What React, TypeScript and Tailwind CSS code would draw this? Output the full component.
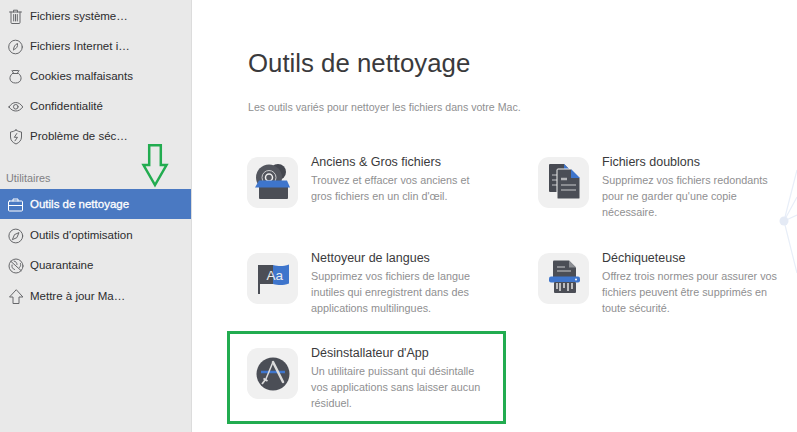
import React from "react";

const font = { fontFamily: '"Liberation Sans", Arial, sans-serif' };

const S = { fill: "none", stroke: "#66676a", strokeWidth: 1, strokeLinecap: "round" as const, strokeLinejoin: "round" as const };

function Ico({ children, color }: { children: React.ReactNode; color?: string }) {
  return (
    <svg width="18" height="18" viewBox="0 0 18 18" className="shrink-0" {...S} stroke={color ?? S.stroke}>
      {children}
    </svg>
  );
}

const Trash = () => (
  <Ico>
    <path d="M2.500 4h12M6.500 4V2.200h4V4M4 4v10.500a1 1 0 0 0 1 1h7a1 1 0 0 0 1-1V4M6.700 6.500v6.500M8.500 6.500v6.500M10.300 6.500v6.500" />
  </Ico>
);
const Leaf = () => (
  <Ico>
    <circle cx="8.500" cy="9" r="6.800" />
    <path d="M6.500 12c0-3 1.500-5.500 4-6.500.4 2.800-.8 5.200-3 5.800" />
  </Ico>
);
const Bug = () => (
  <Ico>
    <path d="M5 2.500l1.500 2.500M12 2.500L10.500 5M6 2.500h5" />
    <path d="M5.500 5.500h6c2 1.500 2.800 3.500 2.500 5.500-.4 2.600-2.600 4-5.500 4S3.400 13.600 3 11c-.3-2 .5-4 2.500-5.500z" />
  </Ico>
);
const Eye = () => (
  <Ico>
    <path d="M2 9c2-3 4.200-4.500 6.800-4.500S13.800 6 15.800 9c-2 2.700-4.400 4-7 4s-4.800-1.300-6.800-4z" />
    <circle cx="8.800" cy="8.800" r="2.300" />
  </Ico>
);
const Shield = () => (
  <Ico>
    <path d="M9 2c1.800 1.200 3.600 1.800 5.500 2v5c0 3.300-2.200 5.600-5.500 7-3.300-1.400-5.500-3.700-5.500-7V4C5.400 3.800 7.200 3.200 9 2z" />
    <path d="M9.800 5.500L7.300 9.300h3.200L8 12.800" />
  </Ico>
);
const Case = () => (
  <Ico color="#ffffff">
    <rect x="1.500" y="5" width="14" height="10" rx="1" />
    <path d="M6 5V3h5v2M1.500 9.500h14" />
  </Ico>
);
const Compass = () => (
  <Ico>
    <circle cx="8.800" cy="9" r="6.900" />
    <path d="M5.500 12.300l2-4.700 4.500-2-2 4.700z" />
  </Ico>
);
const Quarantine = () => (
  <Ico>
    <circle cx="9" cy="9" r="7" />
    <path d="M3.800 4.300l10.400 9.400M7 4c2 .5 3 1.800 3 3.500M5 8c-.5 2 .5 4 2.500 4.500M13.500 6.500c.5 1.500 0 3-1 4" />
  </Ico>
);
const Up = () => (
  <Ico>
    <path d="M9 2L2.500 9H6v6.500h6V9h3.500z" />
  </Ico>
);

function NavRow({ icon, label, active }: { icon: React.ReactNode; label: string; active?: boolean }) {
  return (
    <div
      className={`flex h-[30px] items-center gap-[5px] pl-[7px] text-[11.500px] ${
        active ? "bg-[#4a79c2] pt-[2px] text-white [-webkit-text-stroke:0.3px_white]" : "text-[#2c2c2e]"
      }`}
    >
      {icon}
      <span>{label}</span>
    </div>
  );
}

function Card({ icon, title, lines, w }: { icon: React.ReactNode; title: string; lines: string[]; w: string }) {
  return (
    <div className={`flex gap-[13px] ${w}`}>
      <div className="pt-[3px]">
        <div className="flex h-[51px] w-[51px] shrink-0 items-center justify-center rounded-[11px] bg-[#f0f0f0]">
          {icon}
        </div>
      </div>
      <div>
        <div className="text-[12.500px] leading-[16px] text-[#3a3a3c]">{title}</div>
        <div className="mt-[2px] text-[10.800px] leading-[16px] text-[#8f8f91]">
          {lines.map((l) => (
            <div key={l} className="whitespace-nowrap">{l}</div>
          ))}
        </div>
      </div>
    </div>
  );
}

const BoxIcon = () => (
  <svg width="38" height="38" viewBox="0 0 38 38">
    <circle cx="24" cy="8" r="8" fill="#44474f" />
    <circle cx="15" cy="13.500" r="13" fill="#53565e" />
    <circle cx="15" cy="13.500" r="7" fill="none" stroke="#c9cacc" strokeWidth="1" />
    <circle cx="15" cy="13.500" r="3.500" fill="none" stroke="#eeeeee" strokeWidth="1.500" />
    <rect x="5" y="22" width="29" height="13" rx="1" fill="#4b4e56" />
    <path d="M5 16.500h28l3 7H1z" fill="#3e75cc" />
  </svg>
);
const DocsIcon = () => (
  <svg width="38" height="38" viewBox="0 0 38 38">
    <path d="M4 1a1 1 0 0 1 1-1h14l7 7v21H5a1 1 0 0 1-1-1z" fill="#474a52" />
    <path d="M19 0l7 7h-7z" fill="#3e75cc" />
    <path d="M7 11h5M7 16h5M7 21h5" stroke="#9a9ca1" strokeWidth="1.500" />
    <path d="M12 6a1 1 0 0 1 1-1h13l9 9v20a1 1 0 0 1-1 1H13a1 1 0 0 1-1-1z" fill="#4b4e56" stroke="#f0f0f0" strokeWidth="1" />
    <path d="M26 5l9 9h-9z" fill="#3e75cc" />
    <path d="M16 15h6" stroke="#b5b6b9" strokeWidth="2.500" />
    <path d="M16 21h15M16 26h15" stroke="#c9cacc" strokeWidth="1.200" />
  </svg>
);
const FlagIcon = () => (
  <svg width="38" height="38" viewBox="0 0 38 38">
    <rect x="4" y="5" width="2" height="29" fill="#4b4e56" />
    <path d="M4 5h15v19H4z" fill="#4b4e56" />
    <path d="M19 5c6 1.500 10 1.500 16-.5v19c-6 2-10 2-16 .5z" fill="#3e75cc" />
    <text x="12.500" y="19.500" fontSize="13.500" fill="#ececec" fontFamily='"Liberation Sans", sans-serif'>Aa</text>
  </svg>
);
const ShredIcon = () => (
  <svg width="38" height="38" viewBox="0 0 38 38">
    <path d="M8 1.500a1 1 0 0 1 1-1h15l7 7V17H8z" fill="#4b4e56" />
    <path d="M24 .5l7 7h-7z" fill="#8d8f94" />
    <path d="M12 7h8M12 11h14" stroke="#c9cacc" strokeWidth="1.200" />
    <rect x="4" y="16.500" width="31" height="6" rx="2" fill="#3e75cc" />
    <circle cx="31" cy="19.500" r="1" fill="#fff" />
    <rect x="9" y="22" width="22" height="11" rx="1" fill="#4b4e56" />
    <path d="M12 23v6M15 23v8M19 23v5M23 23v8M27 23v6" stroke="#e2e2e2" strokeWidth="1.500" />
  </svg>
);
const AppIcon = () => (
  <svg width="34" height="34" viewBox="0 0 34 34">
    <circle cx="17" cy="17" r="16.500" fill="#4b4e56" />
    <path d="M5 15h24" stroke="#3e75cc" strokeWidth="2.500" />
    <path d="M17 5L9.500 23" stroke="#dcdcdc" strokeWidth="1.500" strokeLinecap="round" fill="none" />
    <path d="M17 5l10 20" stroke="#dcdcdc" strokeWidth="2.500" strokeLinecap="round" fill="none" />
    <path d="M6 27l3.500-4.500M7.500 21.500l4 2.500" stroke="#dcdcdc" strokeWidth="1.800" fill="none" />
  </svg>
);

export default function App() {
  return (
    <div className="relative flex h-[432px] w-[797px] overflow-hidden bg-white" style={font}>
      <aside className="h-full w-[192px] shrink-0 border-r border-[#dcdcdc] bg-[#e9e9e9]">
        <div className="pt-[2px]">
          <NavRow icon={<Trash />} label="Fichiers système…" />
          <NavRow icon={<Leaf />} label="Fichiers Internet i…" />
          <NavRow icon={<Bug />} label="Cookies malfaisants" />
          <NavRow icon={<Eye />} label="Confidentialité" />
          <NavRow icon={<Shield />} label="Problème de séc…" />
        </div>
        <div className="mt-[18px] mb-[3px] pl-[6px] text-[10.800px] leading-[16px] text-[#808082]">Utilitaires</div>
        <NavRow icon={<Case />} label="Outils de nettoyage" active />
        <div className="mt-[2px]">
          <NavRow icon={<Compass />} label="Outils d'optimisation" />
          <NavRow icon={<Quarantine />} label="Quarantaine" />
          <div className="pt-px">
            <NavRow icon={<Up />} label="Mettre à jour Ma…" />
          </div>
        </div>
      </aside>

      <main className="flex-1 pl-[55px]">
        <h1 className="mt-[47px] ml-px text-[25.800px] leading-[32px] text-[#3a3a3c]">Outils de nettoyage</h1>
        <p className="mt-[20px] ml-px text-[10.600px] leading-[16px] text-[#8f8f91]">
          Les outils variés pour nettoyer les fichiers dans votre Mac.
        </p>
        <div className="mt-[39px] flex flex-col gap-[30px]">
          <div className="flex">
            <Card
              w="w-[291px]"
              icon={<BoxIcon />}
              title="Anciens & Gros fichiers"
              lines={["Trouvez et effacer vos anciens et", "gros fichiers en un clin d'œil."]}
            />
            <Card
              w="w-[260px]"
              icon={<DocsIcon />}
              title="Fichiers doublons"
              lines={["Supprimez vos fichiers redondants", "pour ne garder qu'une copie", "nécessaire."]}
            />
          </div>
          <div className="flex">
            <Card
              w="w-[291px]"
              icon={<FlagIcon />}
              title="Nettoyeur de langues"
              lines={["Supprimez vos fichiers de langue", "inutiles qui enregistrent dans des", "applications multilingues."]}
            />
            <Card
              w="w-[260px]"
              icon={<ShredIcon />}
              title="Déchiqueteuse"
              lines={["Offrez trois normes pour assurer vos", "fichiers peuvent être supprimés en", "toute sécurité."]}
            />
          </div>
          <div className="-mt-px flex">
            <Card
              w="w-[291px]"
              icon={<AppIcon />}
              title="Désinstallateur d'App"
              lines={["Un utilitaire puissant qui désintalle", "vos applications sans laisser aucun", "résiduel."]}
            />
          </div>
        </div>
      </main>

      {/* background decoration at right edge */}
      <svg className="pointer-events-none absolute top-[130px] left-[770px]" width="27" height="190" viewBox="0 0 27 190">
        <g stroke="#e8eef8" strokeWidth="1.200" fill="none">
          <path d="M14 91L27 40M14 91L27 67M14 91L27 85M14 91L27 143" />
        </g>
        <circle cx="14" cy="91" r="4.500" fill="#e4eaf5" />
      </svg>

      {/* annotation: green rectangle */}
      <div className="absolute top-[331px] left-[227px] h-[93px] w-[279px] border-[3px] border-[#22ac50]" />

      {/* annotation: green arrow */}
      <svg className="absolute top-[144px] left-[140px]" width="30" height="44" viewBox="0 0 30 44">
        <path d="M9.200 1.200h11.600V21h5.700L15 41 3.500 21h5.700z" fill="none" stroke="#22ac50" strokeWidth="2.500" />
      </svg>
    </div>
  );
}
